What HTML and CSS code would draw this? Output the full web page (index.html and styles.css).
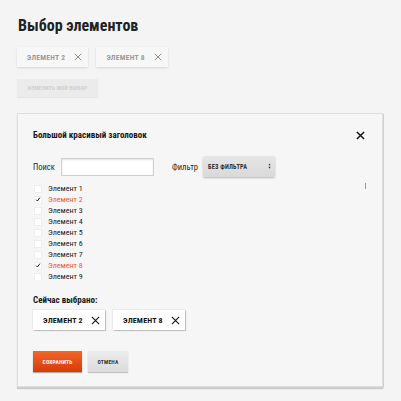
FILE: index.html
```html
<!DOCTYPE html>
<html lang="ru">
<head>
<meta charset="utf-8">
<link rel="stylesheet" href="styles.css">
</head>
<body>
<main class="page">
  <h1 class="title">Выбор элементов</h1>
  <div class="chips chips-top">
    <span class="chip chip-muted">Элемент 2<svg class="x" viewBox="0 0 10 10"><path d="M1 1L9 9M9 1L1 9"/></svg></span>
    <span class="chip chip-muted">Элемент 8<svg class="x" viewBox="0 0 10 10"><path d="M1 1L9 9M9 1L1 9"/></svg></span>
  </div>
  <button class="btn btn-disabled">Изменить мой выбор</button>

  <section class="modal">
    <header class="modal-head">
      <h2 class="modal-title">Большой красивый заголовок</h2>
      <svg class="close" viewBox="0 0 10 10"><path d="M1 1L9 9M9 1L1 9"/></svg>
    </header>
    <div class="filters">
      <label class="lbl">Поиск</label>
      <span class="input"></span>
      <label class="lbl lbl-filter">Фильтр</label>
      <span class="select">Без фильтра<svg class="arrows" viewBox="0 0 4 8"><path d="M2 0.5L3.5 3H0.5ZM2 7.5L3.5 5H0.5Z"/></svg></span>
    </div>
    <div class="list-wrap">
      <ul class="list">
        <li class="item"><span class="box"></span>Элемент 1</li>
        <li class="item on"><span class="box"><svg viewBox="0 0 8 8"><path d="M1.5 4.2L3.2 6L6.5 1.5"/></svg></span>Элемент 2</li>
        <li class="item"><span class="box"></span>Элемент 3</li>
        <li class="item"><span class="box"></span>Элемент 4</li>
        <li class="item"><span class="box"></span>Элемент 5</li>
        <li class="item"><span class="box"></span>Элемент 6</li>
        <li class="item"><span class="box"></span>Элемент 7</li>
        <li class="item on"><span class="box"><svg viewBox="0 0 8 8"><path d="M1.5 4.2L3.2 6L6.5 1.5"/></svg></span>Элемент 8</li>
        <li class="item"><span class="box"></span>Элемент 9</li>
      </ul>
      <span class="scrollbar"></span>
    </div>
    <h3 class="sub">Сейчас выбрано:</h3>
    <div class="chips chips-sel">
      <span class="chip chip-dark">Элемент 2<svg class="x" viewBox="0 0 10 10"><path d="M1 1L9 9M9 1L1 9"/></svg></span>
      <span class="chip chip-dark">Элемент 8<svg class="x" viewBox="0 0 10 10"><path d="M1 1L9 9M9 1L1 9"/></svg></span>
    </div>
    <div class="actions">
      <button class="btn btn-save">Сохранить</button>
      <button class="btn btn-cancel">Отмена</button>
    </div>
  </section>
</main>
</body>
</html>
```
FILE: styles.css
```css
* { box-sizing: border-box; }
html, body { margin: 0; padding: 0; }
body {
  background: #f4f4f4;
  font-family: "Liberation Sans Narrow", "Roboto Condensed", Roboto, sans-serif;
  color: #222;
  width: 401px;
  height: 401px;
  overflow: hidden;
}
.page {
  padding: 16px 18px 0 17px;
  display: flex;
  flex-direction: column;
  align-items: flex-start;
}
.title {
  margin: 0 0 0 1px;
  font-size: 16px;
  line-height: 20px;
  font-weight: bold;
  color: #222;
}
.chips { display: flex; gap: 8px; }
.chips-top { margin-top: 11px; }
.chip {
  display: inline-flex;
  align-items: center;
  height: 20px;
  padding: 0 6px 0 10px;
  font-size: 7.5px;
  font-weight: bold;
  text-transform: uppercase;
  letter-spacing: 0.3px;
  white-space: nowrap;
}
.chip .x { width: 8px; height: 8px; margin-left: 9px; fill: none; stroke-width: 1.2; flex: none; }
.chip-muted {
  background: #f7f7f7;
  color: #9a9a9a;
  box-shadow: 0 1px 2px rgba(0,0,0,0.12);
}
.chip-muted .x { stroke: #8a8a8a; }
.btn {
  border: 0;
  font-family: inherit;
  text-transform: uppercase;
  font-weight: bold;
  font-size: 5.5px;
  letter-spacing: 0.2px;
  padding: 0;
  cursor: default;
  white-space: nowrap;
}
.btn-disabled {
  margin-top: 12px;
  width: 81px;
  height: 18px;
  background: #ebebeb;
  color: #cfcfcf;
  box-shadow: 0 1px 1px rgba(0,0,0,0.06);
}
.modal {
  margin-top: 16px;
  width: 366px;
  height: 274px;
  background: #f6f6f6;
  border: 1px solid #dedede;
  box-shadow: 1px 1px 0 #d0d0d0, 0 2px 1px #c8c8c8;
  padding: 12px 16px 0 15px;
  display: flex;
  flex-direction: column;
}
.modal-head {
  display: flex;
  justify-content: space-between;
  align-items: center;
  height: 18px;
}
.modal-title {
  margin: 0;
  font-size: 9px;
  font-weight: bold;
  color: #1a1a1a;
}
.close { width: 9px; height: 9px; fill: none; stroke: #111; stroke-width: 1.6; margin-right: 1px; }
.filters {
  display: flex;
  align-items: center;
  margin-top: 12px;
  height: 21px;
}
.lbl { font-size: 8.5px; color: #2a2a2a; width: 28px; }
.lbl-filter { width: 31px; margin-left: 18px; }
.input {
  width: 93px;
  height: 18px;
  background: #fff;
  border: 1px solid #cfcfcf;
  box-shadow: inset 0 1px 2px rgba(0,0,0,0.12);
}
.select {
  position: relative;
  display: flex;
  align-items: center;
  width: 72px;
  height: 21px;
  padding-left: 5px;
  border-radius: 2px;
  background: linear-gradient(#e6e6e6, #d9d9d9);
  box-shadow: 0 1px 2px rgba(0,0,0,0.25);
  font-size: 6.3px;
  font-weight: bold;
  letter-spacing: 0.2px;
  text-transform: uppercase;
  color: #333;
}
.arrows {
  position: absolute;
  right: 4px;
  top: 7px;
  width: 3px;
  height: 6px;
  fill: #333;
}
.list-wrap {
  display: flex;
  justify-content: space-between;
  margin-top: 6px;
  height: 97px;
  overflow: hidden;
}
.list { margin: 0; padding: 0; list-style: none; }
.item {
  display: flex;
  align-items: center;
  height: 11px;
  font-size: 8px;
  color: #222;
}
.item.on { color: #f0582c; }
.box {
  display: inline-flex;
  align-items: center;
  justify-content: center;
  width: 8px;
  height: 8px;
  margin-right: 6px;
  margin-left: 1px;
  background: #fff;
  border: 1px solid #eeeeee;
}
.box svg { width: 7px; height: 7px; fill: none; stroke: #111; stroke-width: 1.3; }
.scrollbar {
  width: 1px;
  height: 9px;
  margin-top: -3px;
  margin-right: 0;
  background: #999;
}
.sub {
  margin: 14px 0 0;
  font-size: 9px;
  font-weight: bold;
  color: #1a1a1a;
  line-height: 12px;
}
.chips-sel { margin-top: 4px; }
.chip-dark {
  background: #fff;
  color: #111;
  width: 72px;
  justify-content: space-between;
  padding: 0 5px 0 10px;
  font-size: 8px;
  letter-spacing: 0.2px;
  box-shadow: 1px 1px 1px rgba(0,0,0,0.18), 0 0 0 1px #ececec;
}
.chip-dark .x { stroke: #111; width: 9px; height: 9px; margin-left: 0; }
.actions { display: flex; gap: 6px; margin-top: 21px; }
.btn-save {
  width: 49px;
  height: 21px;
  background: linear-gradient(#f4652a, #d43c08);
  color: #fff;
  box-shadow: 0 1px 1px rgba(0,0,0,0.3);
}
.btn-cancel {
  width: 40px;
  height: 21px;
  background: linear-gradient(#ececec, #dcdcdc);
  color: #333;
  box-shadow: 0 1px 1px rgba(0,0,0,0.2);
}
```
